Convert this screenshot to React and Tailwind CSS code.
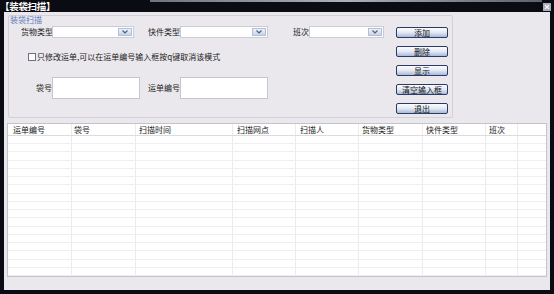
const font = { fontFamily: '"Noto Sans CJK SC", "Noto Sans", sans-serif' };

const columns = [
  { label: '运单编号', w: 'w-[64px]', pl: 'pl-[5px]' },
  { label: '袋号', w: 'w-[64px]', pl: 'pl-[2px]' },
  { label: '扫描时间', w: 'w-[97px]', pl: 'pl-[3px]' },
  { label: '扫描网点', w: 'w-[63px]', pl: 'pl-[4px]' },
  { label: '扫描人', w: 'w-[63px]', pl: 'pl-[4px]' },
  { label: '货物类型', w: 'w-[64px]', pl: 'pl-[3px]' },
  { label: '快件类型', w: 'w-[63px]', pl: 'pl-[3px]' },
  { label: '班次', w: 'w-[32px]', pl: 'pl-[3px]' },
];

const rows = Array.from({ length: 17 }, (_, i) => i);

function Combo({ width }) {
  return (
    <div className={`${width} shrink-0 h-[12px] bg-white border border-[#c9ccd4] flex justify-end p-[1px]`}>
      <div className="w-[14px] h-full bg-gradient-to-b from-[#eef2f9] to-[#c9d4e6] border border-[#b3bfd4] flex items-center justify-center">
        <svg width="6" height="4" viewBox="0 0 6 4">
          <path d="M0.5 0.5 L3 3 L5.5 0.5" fill="none" stroke="#4d5f86" strokeWidth="1.2" />
        </svg>
      </div>
    </div>
  );
}

function Btn({ children }) {
  return (
    <button className="w-[52px] h-[11px] rounded-[2px] border border-[#2b3b63] bg-gradient-to-b from-[#fbfcfe] via-[#e3e9f4] to-[#a9b9d8] text-[8px] leading-none text-[#111] whitespace-nowrap flex items-center justify-center">
      {children}
    </button>
  );
}

function Label({ className, children }) {
  return <span className={`${className} shrink-0 whitespace-nowrap`}>{children}</span>;
}

export default function App() {
  return (
    <div className="w-[554px] h-[294px] bg-[#0b0c13] flex flex-col text-[#1a1a1a]" style={font}>
      {/* title bar */}
      <div className="h-[12px] relative flex items-center">
        <div className="absolute top-0 left-[150px] w-[392px] h-[2px] bg-gradient-to-r from-[#6f747c] via-[#aab1b9] to-[#5d6269]" />
        <span className="relative text-white font-bold text-[9.5px] leading-[12px] whitespace-nowrap tracking-[-0.3px]">【装袋扫描】</span>
        <div className="relative ml-auto mr-[3px] mt-[2px] w-[8px] h-[8px] bg-[#a7acb5] flex items-center justify-center">
          <svg width="6" height="6" viewBox="0 0 6 6">
            <path d="M1 1 L5 5 M5 1 L1 5" stroke="#f4f4f6" strokeWidth="1.3" />
          </svg>
        </div>
      </div>

      {/* body */}
      <div className="flex-1 ml-[4px] mr-[4px] mb-[4px] bg-[#ebe8ed] flex flex-col">
        <div className="ml-[4px] mt-[3px] w-[445px] h-[103px] border border-[#d3d0d9] rounded-[2px] relative flex">
          <span className="absolute top-[0px] left-[1px] text-[8px] leading-none whitespace-nowrap text-[#5b7bb9]">装袋扫描</span>

          <div className="w-[375px] shrink-0 pl-[12px] pt-[10px] flex flex-col text-[8px] leading-none">
            <div className="flex items-center h-[12px]">
              <Label className="w-[31px]">货物类型</Label>
              <Combo width="w-[82px]" />
              <Label className="w-[32px] ml-[14px]">快件类型</Label>
              <Combo width="w-[88px]" />
              <Label className="w-[16px] ml-[25px]">班次</Label>
              <Combo width="w-[75px]" />
            </div>

            <div className="flex items-center mt-[15px] pl-[7px] h-[8px]">
              <div className="w-[8px] h-[8px] shrink-0 bg-white border border-[#6f7180]" />
              <Label className="ml-[1px]">只修改运单,可以在运单编号输入框按q键取消该模式</Label>
            </div>

            <div className="flex items-center mt-[16px] h-[22px] pl-[15px]">
              <Label className="w-[16px]">袋号</Label>
              <div className="w-[88px] shrink-0 h-full bg-white border border-[#c6c6cf]" />
              <Label className="w-[32px] ml-[8px]">运单编号</Label>
              <div className="w-[88px] shrink-0 h-full bg-white border border-[#c6c6cf]" />
            </div>
          </div>

          <div className="ml-[12px] pt-[11px] flex flex-col gap-[8px]">
            <Btn>添加</Btn>
            <Btn>删除</Btn>
            <Btn>显示</Btn>
            <Btn>清空输入框</Btn>
            <Btn>退出</Btn>
          </div>
        </div>

        {/* table */}
        <div className="mt-[5px] ml-[3px] w-[540px] h-[154px] bg-white border border-[#c4c3cb] flex flex-col">
          <div className="h-[12px] flex border-b border-[#dcdcdf] text-[8px] leading-none">
            {columns.map((c) => (
              <div key={c.label} className={`${c.w} ${c.pl} h-full flex items-center whitespace-nowrap border-r border-[#ececee]`}>
                {c.label}
              </div>
            ))}
            <div className="flex-1" />
          </div>
          <div className="flex-1 flex flex-col">
            {rows.map((r) => (
              <div key={r} className="flex-1 flex border-b border-[#efeff1]">
                {columns.map((c) => (
                  <div key={c.label} className={`${c.w} h-full border-r border-[#ececee]`} />
                ))}
                <div className="flex-1" />
              </div>
            ))}
          </div>
        </div>
      </div>
    </div>
  );
}
